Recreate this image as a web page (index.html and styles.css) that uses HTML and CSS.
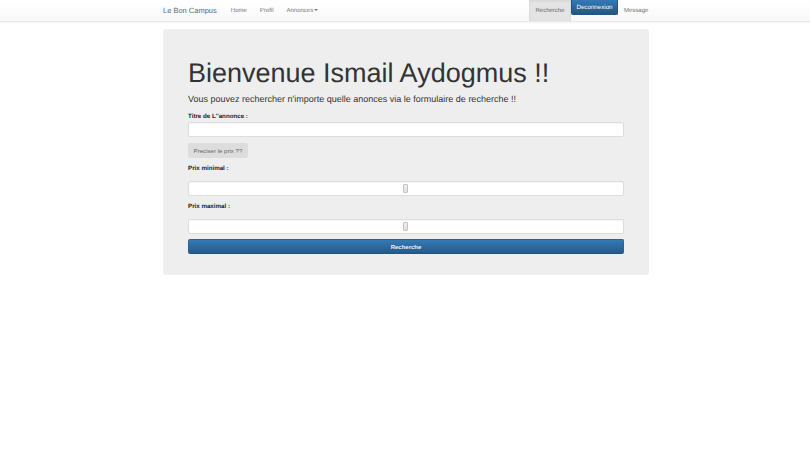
FILE: index.html
```html
<!DOCTYPE html>
<html lang="fr">
<head>
<meta charset="utf-8">
<title>Le Bon Campus</title>
<link rel="stylesheet" href="styles.css">
</head>
<body>
<nav class="navbar">
  <div class="nav-inner">
    <a class="brand">Le Bon Campus</a>
    <a class="nav-link">Home</a>
    <a class="nav-link">Profil</a>
    <a class="nav-link">Annonces<span class="caret"></span></a>
    <div class="nav-right">
      <a class="nav-link active">Recherche</a>
      <a class="logout">Deconnexion</a>
      <a class="nav-link">Message</a>
    </div>
  </div>
</nav>
<main class="jumbotron">
  <h1>Bienvenue Ismail Aydogmus !!</h1>
  <p class="lead">Vous pouvez rechercher n'importe quelle anonces via le formulaire de recherche !!</p>
  <form class="form">
    <label class="label label-title">Titre de L''annonce :</label>
    <input class="control" type="text">
    <button class="toggle" type="button">Preciser le prix ??</button>
    <label class="label label-min">Prix minimal :</label>
    <input class="control range" type="range">
    <label class="label label-max">Prix maximal :</label>
    <input class="control range" type="range">
    <button class="submit" type="button">Recherche</button>
  </form>
</main>
</body>
</html>
```
FILE: styles.css
```css
* { box-sizing: border-box; }
html, body { margin: 0; padding: 0; background: #fff; }
body { font-family: "Liberation Sans", Arial, sans-serif; color: #333; height: 460px; overflow: hidden; text-rendering: geometricPrecision; }

.navbar {
  height: 22px;
  background: linear-gradient(to bottom, #fff, #f8f8f8);
  border-bottom: 1px solid #e7e7e7;
  box-shadow: 0 1px 2px rgba(0,0,0,.05);
}
.nav-inner { width: 486px; margin-left: 163px; display: flex; align-items: stretch; height: 21px; }
.brand { font-size: 7.5px; line-height: 21px; color: #5f6a76; margin-right: 7.5px; }
.nav-link { font-size: 6px; line-height: 23px; color: #777; padding: 0 6.5px; white-space: nowrap; }
.caret {
  display: inline-block; width: 0; height: 0; margin-left: 1px; vertical-align: middle;
  border-top: 2px solid #777; border-left: 2px solid transparent; border-right: 2px solid transparent;
}
.nav-right { margin-left: auto; display: flex; align-items: flex-start; }
.nav-link.active { background: #e4e4e4; height: 21px; color: #666; width: 42px; padding: 0; text-align: center; box-shadow: inset 0 1px 3px rgba(0,0,0,.08); }
.logout {
  height: 15px; width: 47px; text-align: center; font-size: 6.2px; line-height: 15px; color: #fff;
  background: linear-gradient(to bottom, #337ab7, #245580);
  border: 1px solid #245580; border-top: 0; border-radius: 0 0 2px 2px;
}
.nav-right .nav-link:last-child { padding: 0 0 0 6px; width: 31px; }

.jumbotron {
  width: 486px; height: 246px; margin: 7px 0 0 163px; padding: 28px 25px 0;
  background: #eee; border-radius: 3px;
}
h1 { margin: 0; font-size: 27px; font-weight: 400; line-height: 33px; color: #333; }
.lead { margin: 2px 0 0; font-size: 9px; line-height: 15px; color: #333; }
.form { display: flex; flex-direction: column; align-items: flex-start; }
.label { display: block; font-size: 6.2px; font-weight: 700; line-height: 10px; color: #222; }
.label-title { margin-top: 5px; }
.control {
  display: block; width: 100%; height: 15px; margin: 0; padding: 0 6px;
  background: #fff; border: 1px solid #ddd; border-radius: 2px;
  box-shadow: inset 0 1px 1px rgba(0,0,0,.04);
}
.toggle {
  margin: 6px 0 0; width: 60px; height: 15px; padding: 0; font: 6.1px/15px "Liberation Sans", Arial, sans-serif;
  color: #666; background: #ddd; border: 0; border-radius: 2px;
}
.label-min, .label-max { margin-top: 6px; }
.range { -webkit-appearance: none; appearance: none; margin-top: 7px; padding: 0; outline: 0; }
.range::-webkit-slider-runnable-track { -webkit-appearance: none; height: 13px; background: transparent; }
.range::-webkit-slider-thumb {
  -webkit-appearance: none; width: 5px; height: 9px; margin: 2px 0 0 -1px;
  background: linear-gradient(to bottom, #efefef, #e0e0e0); border: 1px solid #c4c4c4; border-radius: 1px;
}
.submit {
  width: 100%; height: 15px; margin: 5px 0 0; padding: 0; font: 700 6px/14px "Liberation Sans", Arial, sans-serif;
  color: #f4f4f4; background: linear-gradient(to bottom, #337ab7, #265a88);
  border: 1px solid #2a6496; border-bottom-color: #245580; border-radius: 2px;
}
```
